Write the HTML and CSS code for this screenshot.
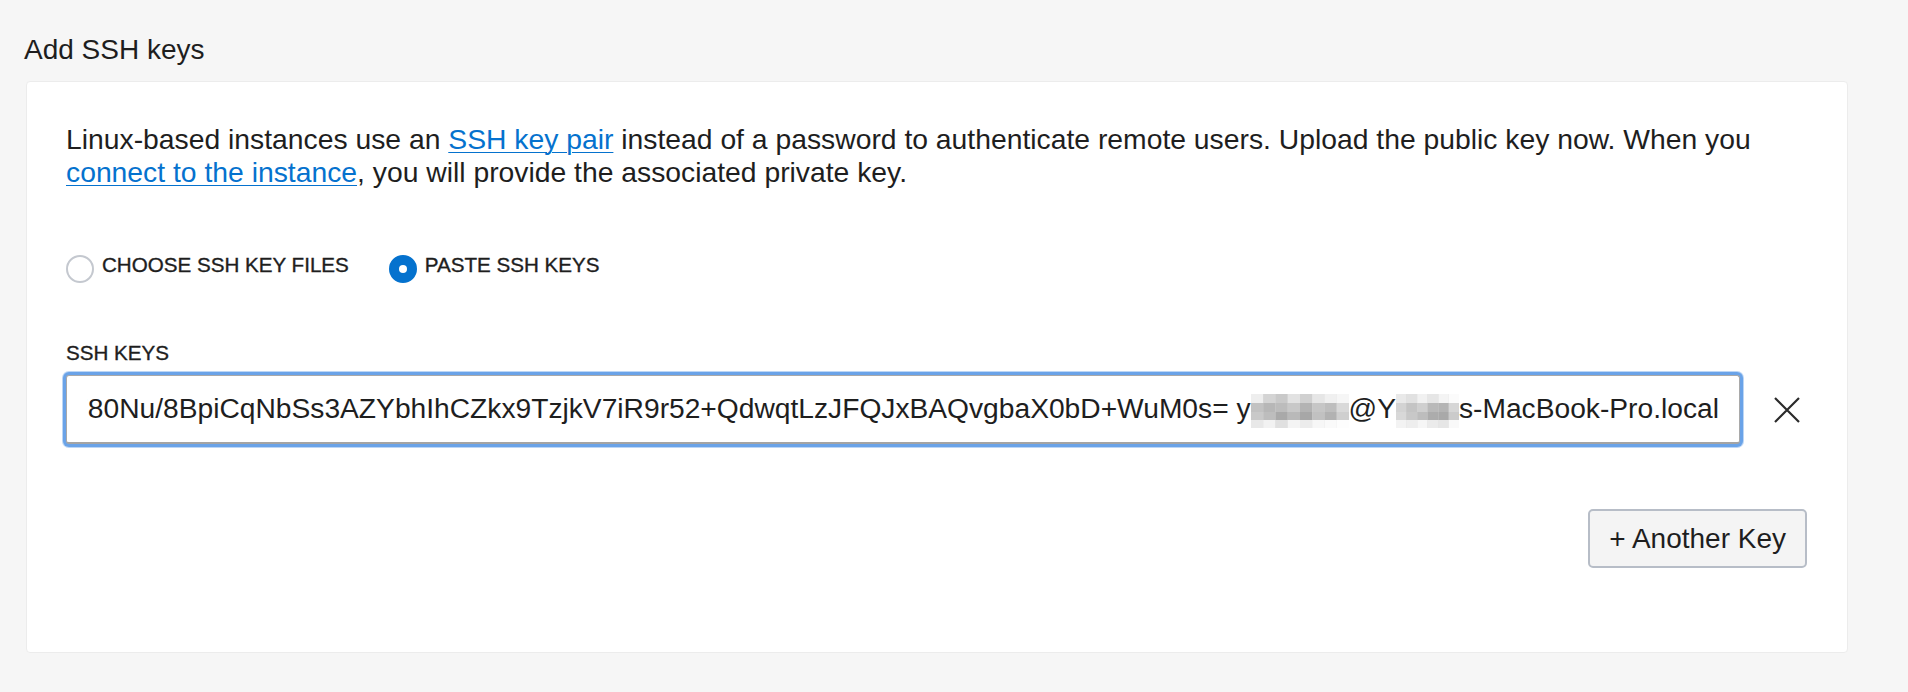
FILE: index.html
```html
<!DOCTYPE html>
<html lang="en">
<head>
<meta charset="utf-8">
<title>Add SSH keys</title>
<link rel="stylesheet" href="styles.css">
</head>
<body>
<div class="page">
  <h2 class="title">Add SSH keys</h2>
  <section class="panel">
    <p class="desc">Linux-based instances use an <a href="#" class="link">SSH key pair</a> instead of a password to authenticate remote users. Upload the public key now. When you <a href="#" class="link">connect to the instance</a>, you will provide the associated private key.</p>

    <div class="radios">
      <label class="radio">
        <span class="dot"></span>
        <span class="radio-label">CHOOSE SSH KEY FILES</span>
      </label>
      <label class="radio">
        <span class="dot dot-on"></span>
        <span class="radio-label">PASTE SSH KEYS</span>
      </label>
    </div>

    <div class="field-label">SSH KEYS</div>
    <div class="key-row">
      <div class="key-input">
        <div class="key-clip">
          <span class="key-text">AAAAB3NzaC1yc2EAAAADAQABAAABAQC7Y'80Nu/8BpiCqNbSs3AZYbhIhCZkx9TzjkV7iR9r52+QdwqtLzJFQJxBAQvgbaX0bD+WuM0s= y<svg class="mosaic m1" width="98" height="34" viewBox="0 0 104 34" preserveAspectRatio="none"><rect x="0" y="0" width="104" height="34" fill="#dcdcdc"/><rect x="0" y="0" width="13" height="9" fill="#eeeeee"/><rect x="13" y="0" width="13" height="9" fill="#d4d4d4"/><rect x="26" y="0" width="13" height="9" fill="#c9c9c9"/><rect x="39" y="0" width="13" height="9" fill="#e2e2e2"/><rect x="52" y="0" width="13" height="9" fill="#d0d0d0"/><rect x="65" y="0" width="13" height="9" fill="#e6e6e6"/><rect x="78" y="0" width="13" height="9" fill="#f0f0f0"/><rect x="91" y="0" width="13" height="9" fill="#f6f6f6"/><rect x="0" y="9" width="13" height="9" fill="#c2c2c2"/><rect x="13" y="9" width="13" height="9" fill="#b7b7b7"/><rect x="26" y="9" width="13" height="9" fill="#bcbcbc"/><rect x="39" y="9" width="13" height="9" fill="#c8c8c8"/><rect x="52" y="9" width="13" height="9" fill="#b3b3b3"/><rect x="65" y="9" width="13" height="9" fill="#c6c6c6"/><rect x="78" y="9" width="13" height="9" fill="#bebebe"/><rect x="91" y="9" width="13" height="9" fill="#d9d9d9"/><rect x="0" y="18" width="13" height="8" fill="#c9c9c9"/><rect x="13" y="18" width="13" height="8" fill="#bdbdbd"/><rect x="26" y="18" width="13" height="8" fill="#a9a9a9"/><rect x="39" y="18" width="13" height="8" fill="#b9b9b9"/><rect x="52" y="18" width="13" height="8" fill="#a7a7a7"/><rect x="65" y="18" width="13" height="8" fill="#c1c1c1"/><rect x="78" y="18" width="13" height="8" fill="#b2b2b2"/><rect x="91" y="18" width="13" height="8" fill="#cfcfcf"/><rect x="0" y="26" width="13" height="8" fill="#e8e8e8"/><rect x="13" y="26" width="13" height="8" fill="#f2f2f2"/><rect x="26" y="26" width="13" height="8" fill="#e0e0e0"/><rect x="39" y="26" width="13" height="8" fill="#f4f4f4"/><rect x="52" y="26" width="13" height="8" fill="#ececec"/><rect x="65" y="26" width="13" height="8" fill="#f7f7f7"/><rect x="78" y="26" width="13" height="8" fill="#fafafa"/><rect x="91" y="26" width="13" height="8" fill="#fdfdfd"/></svg>@Y<svg class="mosaic m2" width="63" height="34" viewBox="0 0 74 34" preserveAspectRatio="none"><rect x="0" y="0" width="74" height="34" fill="#dadada"/><rect x="0" y="0" width="12" height="9" fill="#e9e9e9"/><rect x="12" y="0" width="13" height="9" fill="#e1e1e1"/><rect x="25" y="0" width="12" height="9" fill="#f1f1f1"/><rect x="37" y="0" width="13" height="9" fill="#e6e6e6"/><rect x="50" y="0" width="12" height="9" fill="#f4f4f4"/><rect x="62" y="0" width="12" height="9" fill="#fbfbfb"/><rect x="0" y="9" width="12" height="9" fill="#d3d3d3"/><rect x="12" y="9" width="13" height="9" fill="#c4c4c4"/><rect x="25" y="9" width="12" height="9" fill="#cfcfcf"/><rect x="37" y="9" width="13" height="9" fill="#b9b9b9"/><rect x="50" y="9" width="12" height="9" fill="#b4b4b4"/><rect x="62" y="9" width="12" height="9" fill="#d6d6d6"/><rect x="0" y="18" width="12" height="8" fill="#d8d8d8"/><rect x="12" y="18" width="13" height="8" fill="#c8c8c8"/><rect x="25" y="18" width="12" height="8" fill="#bdbdbd"/><rect x="37" y="18" width="13" height="8" fill="#acacac"/><rect x="50" y="18" width="12" height="8" fill="#a9a9a9"/><rect x="62" y="18" width="12" height="8" fill="#cbcbcb"/><rect x="0" y="26" width="12" height="8" fill="#f3f3f3"/><rect x="12" y="26" width="13" height="8" fill="#eeeeee"/><rect x="25" y="26" width="12" height="8" fill="#f6f6f6"/><rect x="37" y="26" width="13" height="8" fill="#ebebeb"/><rect x="50" y="26" width="12" height="8" fill="#e6e6e6"/><rect x="62" y="26" width="12" height="8" fill="#f9f9f9"/></svg>s-MacBook-Pro.local</span>
        </div>
      </div>
      <button class="remove" type="button" aria-label="Remove key">
        <svg width="26" height="26" viewBox="0 0 26 26"><path d="M1 1 L25 25 M25 1 L1 25" stroke="#2b2b2b" stroke-width="2.2" fill="none"/></svg>
      </button>
    </div>

    <div class="actions">
      <button class="another" type="button">+ Another Key</button>
    </div>
  </section>
</div>
</body>
</html>
```

FILE: styles.css
```css
html, body {
  margin: 0;
  padding: 0;
  background: #f6f6f6;
}

body {
  font-family: "Liberation Sans", Arial, Helvetica, sans-serif;
  color: #222222;
}

.page {
  padding: 33px 60px 0 24px;
}

.title {
  margin: 0;
  font-size: 28px;
  line-height: 33px;
  font-weight: normal;
  color: #1e1e1e;
}

.panel {
  margin: 15px 0 0 2px;
  width: 1822px;
  box-sizing: border-box;
  background: #ffffff;
  border: 1px solid #ececec;
  border-radius: 4px;
  padding: 41px 40px 84px 39px;
}

.desc {
  margin: 0;
  font-size: 28.3px;
  line-height: 33px;
  color: #1e1e1e;
}

.link {
  color: #0572ce;
  text-decoration: underline;
  text-underline-offset: 3px;
  text-decoration-thickness: 1px;
}

.radios {
  display: flex;
  align-items: flex-start;
  gap: 40px;
  margin-top: 64px;
}

.radio {
  display: flex;
  align-items: flex-start;
  gap: 8px;
}

.dot {
  width: 28px;
  height: 28px;
  margin-top: 2px;
  box-sizing: border-box;
  border: 2px solid #c4c8cf;
  border-radius: 50%;
  background: #ffffff;
  display: flex;
  align-items: center;
  justify-content: center;
}

.dot-on {
  border-color: #0572ce;
  background: #0572ce;
}

.dot-on::after {
  content: "";
  width: 8px;
  height: 8px;
  border-radius: 50%;
  background: #ffffff;
}

.radio-label,
.field-label {
  font-size: 20.6px;
  line-height: 24px;
  color: #1e1e1e;
  -webkit-text-stroke: 0.35px #1e1e1e;
}

.field-label {
  margin-top: 58px;
}

.key-row {
  display: flex;
  align-items: center;
  gap: 27px;
  margin-top: 10px;
}

.key-input {
  flex: 1;
  min-width: 0;
  height: 69px;
  box-sizing: border-box;
  border: 1px solid #a9a9a9;
  border-bottom: 2px solid #a4a4a4;
  border-radius: 3px;
  box-shadow: 0 0 0 3px #6aa3e8, 0 0 0 4px rgba(106, 163, 232, 0.45);
  padding: 0 20px;
  display: flex;
  align-items: center;
  background: #ffffff;
}

.key-clip {
  flex: 1;
  min-width: 0;
  overflow: hidden;
  display: flex;
  justify-content: flex-end;
}

.key-text {
  flex: none;
  white-space: nowrap;
  font-size: 28.2px;
  line-height: 34px;
  color: #1e1e1e;
}

.mosaic {
  display: inline-block;
  vertical-align: -10px;
}

.remove {
  flex: none;
  width: 40px;
  height: 40px;
  padding: 0;
  border: 0;
  background: transparent;
  display: flex;
  align-items: center;
  justify-content: center;
}

.actions {
  display: flex;
  justify-content: flex-end;
  margin-top: 65px;
}

.another {
  height: 59px;
  padding: 0 19px;
  border: 2px solid #b7bdc7;
  border-radius: 5px;
  background: #f4f4f4;
  font-family: "Liberation Sans", Arial, Helvetica, sans-serif;
  font-size: 28px;
  color: #1e1e1e;
}
```
